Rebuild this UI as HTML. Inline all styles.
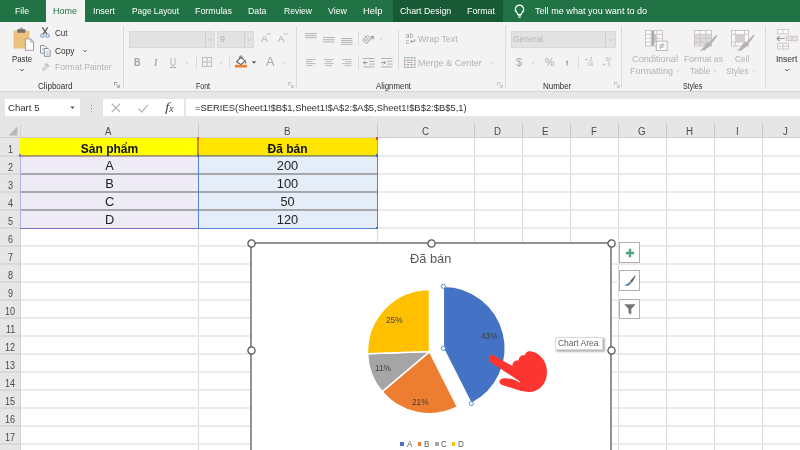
<!DOCTYPE html>
<html lang="vi"><head><meta charset="utf-8"><title>Excel - Pie chart</title>
<style>
html,body{margin:0;padding:0;}
body{width:800px;height:450px;overflow:hidden;position:relative;background:#fff;font-family:"Liberation Sans",sans-serif;}
#app{position:absolute;left:0;top:0;width:800px;height:450px;overflow:hidden;will-change:transform;}
.b{position:absolute;display:block;overflow:visible;}
.t{position:absolute;white-space:nowrap;transform-origin:0 50%;display:block;}
</style></head><body><div id="app">
<div class="b " style="left:0px;top:0px;width:800px;height:22px;background:#217346;"></div>
<div class="b " style="left:392.5px;top:0px;width:110px;height:22px;background:#185a35;"></div>
<div class="b " style="left:45.5px;top:0px;width:39.5px;height:23px;background:#f3f3f3;"></div>
<span class="t" style="left:15.00px;top:4px;color:#fff;font-size:9.8px;line-height:14px;transform:scaleX(0.8865);">File</span>
<span class="t" style="left:53.00px;top:4px;color:#217346;font-size:9.8px;line-height:14px;transform:scaleX(0.9181);">Home</span>
<span class="t" style="left:93.00px;top:4px;color:#fff;font-size:9.8px;line-height:14px;transform:scaleX(0.8976);">Insert</span>
<span class="t" style="left:132.00px;top:4px;color:#fff;font-size:9.8px;line-height:14px;transform:scaleX(0.8540);">Page Layout</span>
<span class="t" style="left:195.00px;top:4px;color:#fff;font-size:9.8px;line-height:14px;transform:scaleX(0.9059);">Formulas</span>
<span class="t" style="left:248.00px;top:4px;color:#fff;font-size:9.8px;line-height:14px;transform:scaleX(0.8937);">Data</span>
<span class="t" style="left:283.50px;top:4px;color:#fff;font-size:9.8px;line-height:14px;transform:scaleX(0.8714);">Review</span>
<span class="t" style="left:327.50px;top:4px;color:#fff;font-size:9.8px;line-height:14px;transform:scaleX(0.9020);">View</span>
<span class="t" style="left:363.00px;top:4px;color:#fff;font-size:9.8px;line-height:14px;transform:scaleX(0.9675);">Help</span>
<span class="t" style="left:399.50px;top:4px;color:#fff;font-size:9.8px;line-height:14px;transform:scaleX(0.8961);">Chart Design</span>
<span class="t" style="left:467.00px;top:4px;color:#fff;font-size:9.8px;line-height:14px;transform:scaleX(0.9021);">Format</span>
<span class="t" style="left:534.50px;top:4px;color:#fff;font-size:9.8px;line-height:14px;transform:scaleX(0.9278);">Tell me what you want to do</span>
<svg class="b" style="left:513px;top:4px;" width="13" height="15" viewBox="0 0 13 15"><path d="M6.5 1.2a4.2 4.2 0 0 0-2.4 7.6c.5.5.7 1 .7 1.7h3.4c0-.7.2-1.2.7-1.7A4.2 4.2 0 0 0 6.5 1.2z" fill="none" stroke="#fff" stroke-width="1.2"/><path d="M4.9 11.8h3.2M5.3 13.3h2.4" stroke="#fff" stroke-width="1.1" fill="none"/></svg>
<div class="b " style="left:0px;top:22px;width:800px;height:69.5px;background:#f3f3f3;"></div>
<div class="b " style="left:0px;top:91px;width:800px;height:1px;background:#d6d6d6;"></div>
<div class="b " style="left:122.5px;top:26px;width:1px;height:62px;background:#dadada;"></div>
<div class="b " style="left:295.5px;top:26px;width:1px;height:62px;background:#dadada;"></div>
<div class="b " style="left:505px;top:26px;width:1px;height:62px;background:#dadada;"></div>
<div class="b " style="left:621.25px;top:26px;width:1px;height:62px;background:#dadada;"></div>
<div class="b " style="left:765px;top:26px;width:1px;height:62px;background:#dadada;"></div>
<svg class="b" style="left:13px;top:28px;" width="22" height="23" viewBox="0 0 22 23"><rect x="0.5" y="2.600" width="15.800" height="17.800" rx="1" fill="#ecc27c"/>
<rect x="4.200" y="1.200" width="8.200" height="3.600" rx=".8" fill="#6f6f6f"/><circle cx="8.300" cy="1.300" r="1.300" fill="none" stroke="#6f6f6f" stroke-width=".9"/>
<path d="M12.400 10.900h5.200l2.900 2.900v8.500h-8.100z" fill="#fff" stroke="#8c8c8c" stroke-width="0.8"/><path d="M17.600 10.900v2.900h2.900" fill="none" stroke="#8c8c8c" stroke-width="0.8"/></svg>
<span class="t" style="left:12.00px;top:52px;color:#2e2e2e;font-size:9.8px;line-height:14px;transform:scaleX(0.7981);">Paste</span>
<svg class="b" style="left:17.5px;top:66.5px;" width="8" height="6" viewBox="0 0 8 6"><path d="M2.25 2.1 L4 3.9 L5.75 2.1" fill="none" stroke="#555" stroke-width="1"/></svg>
<svg class="b" style="left:40.3px;top:27.3px;" width="10" height="11" viewBox="0 0 10 11"><path d="M2.200 0.400L6.900 7.200M7.800 0.400L3.100 7.200" stroke="#5a5a5a" stroke-width="1.200" fill="none"/>
<circle cx="2.400" cy="8.700" r="1.700" fill="none" stroke="#6c8ebf" stroke-width="1"/><circle cx="7.600" cy="8.700" r="1.700" fill="none" stroke="#6c8ebf" stroke-width="1"/></svg>
<span class="t" style="left:54.50px;top:26px;color:#2e2e2e;font-size:9.8px;line-height:14px;transform:scaleX(0.8196);">Cut</span>
<svg class="b" style="left:40.3px;top:44.5px;" width="11" height="12" viewBox="0 0 11 12"><path d="M0.500 0.500h3.800l2 2v5.500h-5.800z" fill="#fff" stroke="#7a8597" stroke-width="0.9"/><path d="M1.800 3.200h2.200M1.800 5h2.200" stroke="#9aa6b8" stroke-width="0.7"/>
<path d="M4.300 3.500h3.800l2 2v5.800h-5.800z" fill="#fff" stroke="#7a8597" stroke-width="0.9"/><path d="M5.700 6.600h3M5.700 8.200h3M5.700 9.800h3" stroke="#9aa6b8" stroke-width="0.7"/></svg>
<span class="t" style="left:54.50px;top:44px;color:#2e2e2e;font-size:9.8px;line-height:14px;transform:scaleX(0.8523);">Copy</span>
<svg class="b" style="left:81px;top:47.5px;" width="8" height="6" viewBox="0 0 8 6"><path d="M2.25 2.1 L4 3.9 L5.75 2.1" fill="none" stroke="#666" stroke-width="1"/></svg>
<svg class="b" style="left:40.5px;top:62px;" width="10" height="11" viewBox="0 0 10 11"><path d="M5.5 0.8l3.2 3.2-2 2L3.5 2.8z" fill="#c4c4c4"/><path d="M3.2 3.8l2.8 2.8-3.6 2.8-1.6-1.6z" fill="#d0d0d0"/></svg>
<span class="t" style="left:54.50px;top:60px;color:#b3b3b3;font-size:9.8px;line-height:14px;transform:scaleX(0.8717);">Format Painter</span>
<span class="t" style="left:37.50px;top:80px;color:#2e2e2e;font-size:8.5px;line-height:12px;transform:scaleX(0.9482);">Clipboard</span>
<svg class="b" style="left:114px;top:82.3px;" width="6" height="6" viewBox="0 0 6 6"><path d="M0.5 3.5v-3h3" fill="none" stroke="#8a8a8a" stroke-width="0.8"/><path d="M2 2l3 3M5.3 2.8v2.5h-2.5" fill="none" stroke="#8a8a8a" stroke-width="0.8"/></svg>
<div class="b " style="left:129px;top:30.5px;width:85.5px;height:17px;background:#e2e2e2;box-shadow:inset 0 0 0 1px #d9d9d9;"></div>
<div class="b " style="left:205px;top:31.5px;width:1px;height:15px;background:#cfcfcf;"></div>
<svg class="b" style="left:206px;top:36.5px;" width="8" height="6" viewBox="0 0 8 6"><path d="M2.6 2.3 L4 3.7 L5.4 2.3" fill="none" stroke="#bcbcbc" stroke-width="1"/></svg>
<div class="b " style="left:217px;top:30.5px;width:36.5px;height:17px;background:#e2e2e2;box-shadow:inset 0 0 0 1px #d9d9d9;"></div>
<div class="b " style="left:244px;top:31.5px;width:1px;height:15px;background:#cfcfcf;"></div>
<svg class="b" style="left:245px;top:36.5px;" width="8" height="6" viewBox="0 0 8 6"><path d="M2.6 2.3 L4 3.7 L5.4 2.3" fill="none" stroke="#bcbcbc" stroke-width="1"/></svg>
<span class="t" style="left:220.00px;top:32px;color:#b5b5b5;font-size:9.8px;line-height:14px;transform:scaleX(0.9173);">9</span>
<span class="t" style="left:260.50px;top:32px;color:#a9a9a9;font-size:9.9px;line-height:14px;transform:scaleX(1.0297);">A</span>
<svg class="b" style="left:266px;top:32px;" width="5" height="4" viewBox="0 0 5 4"><path d="M0.5 3L2.5 1L4.5 3" fill="none" stroke="#a9a9a9" stroke-width="0.8"/></svg>
<span class="t" style="left:278.00px;top:32px;color:#a9a9a9;font-size:9.5px;line-height:13px;transform:scaleX(0.9942);">A</span>
<svg class="b" style="left:283px;top:32px;" width="5" height="4" viewBox="0 0 5 4"><path d="M0.5 1L2.5 3L4.5 1" fill="none" stroke="#a9a9a9" stroke-width="0.8"/></svg>
<span class="t" style="left:134.00px;top:56px;color:#a3a3a3;font-size:10px;line-height:14px;font-weight:bold;transform:scaleX(0.9000);">B</span>
<span class="t" style="left:153.50px;top:56px;color:#a9a9a9;font-size:10px;line-height:14px;font-weight:bold;font-style:italic;font-family:'Liberation Serif',serif;transform:scaleX(0.8994);">I</span>
<span class="t" style="left:170.00px;top:56px;color:#a9a9a9;font-size:10px;line-height:14px;transform:scaleX(0.8308);">U</span>
<div class="b " style="left:170px;top:67.3px;width:6px;height:0.9px;background:#a9a9a9;"></div>
<svg class="b" style="left:183px;top:59.5px;" width="8" height="6" viewBox="0 0 8 6"><path d="M2.6 2.3 L4 3.7 L5.4 2.3" fill="none" stroke="#cdcdcd" stroke-width="1"/></svg>
<div class="b " style="left:195.5px;top:55px;width:1px;height:14px;background:#dcdcdc;"></div>
<svg class="b" style="left:202px;top:57px;" width="10" height="10" viewBox="0 0 10 10"><rect x="0.5" y="0.5" width="9" height="9" fill="none" stroke="#bdbdbd" stroke-width="1"/><path d="M5 0.5v9M0.5 5h9" stroke="#bdbdbd" stroke-width="1"/></svg>
<svg class="b" style="left:216.75px;top:59.5px;" width="8" height="6" viewBox="0 0 8 6"><path d="M2.6 2.3 L4 3.7 L5.4 2.3" fill="none" stroke="#cdcdcd" stroke-width="1"/></svg>
<div class="b " style="left:229px;top:55px;width:1px;height:14px;background:#dcdcdc;"></div>
<svg class="b" style="left:234.8px;top:55.4px;" width="13" height="13" viewBox="0 0 13 13"><path d="M1.6 6.700L5.700 2.600l4.500 3-4.200 4z" fill="#fff" stroke="#5a5a5a" stroke-width="1.100" stroke-linejoin="round"/>
<path d="M4.600 3.600c-.5-1.500.3-2.600 1.300-2.600s1.600.9 1.500 2" fill="none" stroke="#5a5a5a" stroke-width="1"/>
<path d="M10.400 5.700c1 1.300 1.300 2.400.6 2.900-.7.400-1.400-.5-.6-2.900z" fill="#3a6fb7"/>
<rect x="0" y="9.800" width="12" height="2.700" fill="#ed7d31"/></svg>
<svg class="b" style="left:250.4px;top:59.3px;" width="8" height="6" viewBox="0 0 8 6"><path d="M2.5 2.15 L4 3.85 L5.5 2.15" fill="none" stroke="#44546a" stroke-width="1.1"/></svg>
<span class="t" style="left:265.50px;top:54px;color:#a9a9a9;font-size:12px;line-height:17px;transform:scaleX(1.0619);">A</span>
<svg class="b" style="left:279.75px;top:59.5px;" width="8" height="6" viewBox="0 0 8 6"><path d="M2.6 2.3 L4 3.7 L5.4 2.3" fill="none" stroke="#cdcdcd" stroke-width="1"/></svg>
<span class="t" style="left:195.50px;top:80px;color:#2e2e2e;font-size:8.5px;line-height:12px;transform:scaleX(0.8231);">Font</span>
<svg class="b" style="left:287.5px;top:82.3px;" width="6" height="6" viewBox="0 0 6 6"><path d="M0.5 3.5v-3h3" fill="none" stroke="#b5b5b5" stroke-width="0.8"/><path d="M2 2l3 3M5.3 2.8v2.5h-2.5" fill="none" stroke="#b5b5b5" stroke-width="0.8"/></svg>
<svg class="b" style="left:304.5px;top:32.8px;" width="11.5" height="7.300000000000001" viewBox="0 0 11.5 7.300000000000001"><rect x="0" y="0.0" width="11.5" height="1" fill="#b4b4b4"/><rect x="0" y="2.1" width="11.5" height="1" fill="#b4b4b4"/><rect x="0" y="4.2" width="11.5" height="1" fill="#b4b4b4"/></svg>
<svg class="b" style="left:323px;top:36.6px;" width="11.5" height="7.6000000000000005" viewBox="0 0 11.5 7.6000000000000005"><rect x="0.0" y="0.0" width="11.5" height="1" fill="#b4b4b4"/><rect x="0.0" y="2.2" width="11.5" height="1" fill="#b4b4b4"/><rect x="0.0" y="4.4" width="11.5" height="1" fill="#b4b4b4"/></svg>
<svg class="b" style="left:340.5px;top:38.2px;" width="11.5" height="8.8" viewBox="0 0 11.5 8.8"><rect x="0" y="0.0" width="11.5" height="1" fill="#b4b4b4"/><rect x="0" y="1.95" width="11.5" height="1" fill="#b4b4b4"/><rect x="0" y="3.9" width="11.5" height="1" fill="#b4b4b4"/><rect x="0" y="5.85" width="11.5" height="1" fill="#b4b4b4"/></svg>
<div class="b " style="left:357.5px;top:31px;width:1px;height:15px;background:#dcdcdc;"></div>
<svg class="b" style="left:362px;top:33px;" width="12" height="11" viewBox="0 0 12 11"><text x="0" y="8" font-size="7.500" fill="#9c9c9c" transform="rotate(-42 4 6)" font-family="Liberation Sans,sans-serif">ab</text><path d="M4 10.800L11.300 3.500M11.300 3.500l-2.800.3M11.300 3.500l-.3 2.800" stroke="#8c8c8c" stroke-width="1" fill="none"/></svg>
<svg class="b" style="left:376.5px;top:36px;" width="8" height="6" viewBox="0 0 8 6"><path d="M2.6 2.3 L4 3.7 L5.4 2.3" fill="none" stroke="#cdcdcd" stroke-width="1"/></svg>
<svg class="b" style="left:305.8px;top:58.8px;" width="9.5" height="9.2" viewBox="0 0 9.5 9.2"><rect x="0" y="0.0" width="9.5" height="1" fill="#bcbcbc"/><rect x="0" y="2.05" width="6.5" height="1" fill="#bcbcbc"/><rect x="0" y="4.1" width="9.5" height="1" fill="#bcbcbc"/><rect x="0" y="6.1499999999999995" width="6.5" height="1" fill="#bcbcbc"/></svg>
<svg class="b" style="left:323.5px;top:58.8px;" width="9.5" height="9.2" viewBox="0 0 9.5 9.2"><rect x="0.0" y="0.0" width="9.5" height="1" fill="#bcbcbc"/><rect x="1.5" y="2.05" width="6.5" height="1" fill="#bcbcbc"/><rect x="0.0" y="4.1" width="9.5" height="1" fill="#bcbcbc"/><rect x="1.5" y="6.1499999999999995" width="6.5" height="1" fill="#bcbcbc"/></svg>
<svg class="b" style="left:341.5px;top:58.8px;" width="9.5" height="9.2" viewBox="0 0 9.5 9.2"><rect x="0.0" y="0.0" width="9.5" height="1" fill="#bcbcbc"/><rect x="3.0" y="2.05" width="6.5" height="1" fill="#bcbcbc"/><rect x="0.0" y="4.1" width="9.5" height="1" fill="#bcbcbc"/><rect x="3.0" y="6.1499999999999995" width="6.5" height="1" fill="#bcbcbc"/></svg>
<div class="b " style="left:357.5px;top:55px;width:1px;height:15px;background:#dcdcdc;"></div>
<svg class="b" style="left:362.5px;top:58px;" width="11.5" height="9.5" viewBox="0 0 11.5 9.5"><path d="M0 .5h11.5M6 3.3h5.5M6 6.1h5.5M0 8.9h11.5" stroke="#b0b0b0" stroke-width="1"/><path d="M4.6 4.7H.6M2.2 3.1L.6 4.7l1.6 1.6" fill="none" stroke="#8f8f8f" stroke-width="1"/></svg>
<svg class="b" style="left:380.5px;top:58px;" width="11.5" height="9.5" viewBox="0 0 11.5 9.5"><path d="M0 .5h11.5M6 3.3h5.5M6 6.1h5.5M0 8.9h11.5" stroke="#b0b0b0" stroke-width="1"/><path d="M.4 4.7h4M2.8 3.1l1.6 1.6-1.6 1.6" fill="none" stroke="#8f8f8f" stroke-width="1"/></svg>
<div class="b " style="left:398px;top:30px;width:1px;height:40px;background:#dcdcdc;"></div>
<svg class="b" style="left:404.5px;top:33px;" width="11" height="11" viewBox="0 0 11 11"><text x="0.8" y="5.300" font-size="6.600" fill="#9a9a9a" font-family="Liberation Sans,sans-serif">ab</text><text x="0.8" y="10.700" font-size="6.600" fill="#9a9a9a" font-family="Liberation Sans,sans-serif">c</text><path d="M9.700 6v2.400h-4M7 7L5.600 8.400 7 9.800" fill="none" stroke="#9a9a9a" stroke-width="0.9"/></svg>
<span class="t" style="left:418.25px;top:32px;color:#b3b3b3;font-size:9.8px;line-height:14px;transform:scaleX(0.9084);">Wrap Text</span>
<svg class="b" style="left:403.75px;top:56.5px;" width="11.5" height="11" viewBox="0 0 11.5 11"><rect x=".5" y=".5" width="10.5" height="10" fill="none" stroke="#b9b9b9" stroke-width="1"/><path d="M.5 3.5h10.5M.5 7.5h10.5M4 .5v3M7.5 .5v3M4 7.5v3M7.5 7.5v3" stroke="#b9b9b9" stroke-width="0.9"/><path d="M2.5 5.5h6.5" stroke="#c9a0a0" stroke-width="0.9"/></svg>
<span class="t" style="left:418.25px;top:56px;color:#b3b3b3;font-size:9.8px;line-height:14px;transform:scaleX(0.9216);">Merge &amp; Center</span>
<svg class="b" style="left:488px;top:59.5px;" width="8" height="6" viewBox="0 0 8 6"><path d="M2.6 2.3 L4 3.7 L5.4 2.3" fill="none" stroke="#cdcdcd" stroke-width="1"/></svg>
<span class="t" style="left:376.25px;top:80px;color:#2e2e2e;font-size:8.5px;line-height:12px;transform:scaleX(0.9259);">Alignment</span>
<svg class="b" style="left:497px;top:82.3px;" width="6" height="6" viewBox="0 0 6 6"><path d="M0.5 3.5v-3h3" fill="none" stroke="#b5b5b5" stroke-width="0.8"/><path d="M2 2l3 3M5.3 2.8v2.5h-2.5" fill="none" stroke="#b5b5b5" stroke-width="0.8"/></svg>
<div class="b " style="left:511.25px;top:30.5px;width:104.5px;height:17px;background:#e2e2e2;box-shadow:inset 0 0 0 1px #d9d9d9;"></div>
<div class="b " style="left:605px;top:31.5px;width:1px;height:15px;background:#cfcfcf;"></div>
<svg class="b" style="left:606.5px;top:36.5px;" width="8" height="6" viewBox="0 0 8 6"><path d="M2.6 2.3 L4 3.7 L5.4 2.3" fill="none" stroke="#bcbcbc" stroke-width="1"/></svg>
<span class="t" style="left:513.25px;top:32px;color:#b5b5b5;font-size:9.8px;line-height:14px;transform:scaleX(0.8604);">General</span>
<span class="t" style="left:516.25px;top:54px;color:#a9a9a9;font-size:11.5px;line-height:16px;transform:scaleX(0.9772);">$</span>
<svg class="b" style="left:529.25px;top:59.5px;" width="8" height="6" viewBox="0 0 8 6"><path d="M2.6 2.3 L4 3.7 L5.4 2.3" fill="none" stroke="#cdcdcd" stroke-width="1"/></svg>
<span class="t" style="left:544.50px;top:55px;color:#a9a9a9;font-size:11px;line-height:15px;transform:scaleX(0.9458);">%</span>
<span class="t" style="left:564.50px;top:48px;color:#a9a9a9;font-size:14px;line-height:20px;font-weight:bold;transform:scaleX(1.0284);">,</span>
<div class="b " style="left:578px;top:55px;width:1px;height:14px;background:#dcdcdc;"></div>
<svg class="b" style="left:584.5px;top:57px;" width="10" height="10" viewBox="0 0 10 10"><text x="3.5" y="4.2" font-size="4.6" fill="#b0b0b0" font-family="Liberation Sans,sans-serif">.0</text><text x="1.8" y="9.2" font-size="4.6" fill="#b0b0b0" font-family="Liberation Sans,sans-serif">.00</text><path d="M3 2.5H.5M1.5 1.5l-1 1 1 1" fill="none" stroke="#a9b8cf" stroke-width="0.7"/></svg>
<svg class="b" style="left:602px;top:57px;" width="10" height="10" viewBox="0 0 10 10"><text x="2.4" y="4.2" font-size="4.6" fill="#b0b0b0" font-family="Liberation Sans,sans-serif">.00</text><text x="4.5" y="9.2" font-size="4.6" fill="#b0b0b0" font-family="Liberation Sans,sans-serif">.0</text><path d="M.5 7.5H3M2 6.5l1 1-1 1" fill="none" stroke="#a9b8cf" stroke-width="0.7"/></svg>
<span class="t" style="left:542.50px;top:80px;color:#2e2e2e;font-size:8.5px;line-height:12px;transform:scaleX(0.9344);">Number</span>
<svg class="b" style="left:613.5px;top:82.3px;" width="6" height="6" viewBox="0 0 6 6"><path d="M0.5 3.5v-3h3" fill="none" stroke="#b5b5b5" stroke-width="0.8"/><path d="M2 2l3 3M5.3 2.8v2.5h-2.5" fill="none" stroke="#b5b5b5" stroke-width="0.8"/></svg>
<svg class="b" style="left:645px;top:30px;" width="23" height="21" viewBox="0 0 23 21"><rect x=".5" y=".5" width="17" height="15.5" fill="#fafafa" stroke="#d0c3c8" stroke-width="1"/>
<path d="M.5 4.4h17M.5 8.3h17M.5 12.2h17M6.2 .5v15.5M11.9 .5v15.5" stroke="#d0c3c8" stroke-width="0.9"/>
<rect x="6.6" y=".9" width="2.6" height="14.7" fill="#a9a9a9"/><rect x="9.2" y="4.8" width="2.3" height="7" fill="#c4c4c4"/>
<rect x="11.3" y="11.2" width="10.8" height="9.3" fill="#fff" stroke="#b5b5b5" stroke-width="1"/>
<path d="M14 14.8h5.4M14 17h5.4M18.3 13l-3.2 6" stroke="#9a9a9a" stroke-width="0.8" fill="none"/></svg>
<span class="t" style="left:632.00px;top:52px;color:#b3b3b3;font-size:9.8px;line-height:14px;transform:scaleX(0.9381);">Conditional</span>
<span class="t" style="left:629.50px;top:64px;color:#b3b3b3;font-size:9.8px;line-height:14px;transform:scaleX(0.9180);">Formatting</span>
<svg class="b" style="left:674px;top:67.5px;" width="8" height="6" viewBox="0 0 8 6"><path d="M2.6 2.3 L4 3.7 L5.4 2.3" fill="none" stroke="#cdcdcd" stroke-width="1"/></svg>
<svg class="b" style="left:693.5px;top:30px;" width="23" height="21" viewBox="0 0 23 21"><rect x=".5" y=".5" width="17" height="15.5" fill="#fafafa" stroke="#d0c3c8" stroke-width="1"/>
<rect x="1" y="4.4" width="16" height="11.2" fill="#dcdcdc"/>
<path d="M.5 4.4h17M.5 8.3h17M.5 12.2h17M6.2 .5v15.5M11.9 .5v15.5" stroke="#d0c3c8" stroke-width="0.9"/>
<path d="M22.900 4.600L23.400 6.100 17.900 13.300 15.600 11.400z" fill="#b4b4b4"/><path d="M15.300 11.800L17.600 13.700C16.800 15.800 15 17.200 13 18.200L10.600 20.500H5.400C8.400 19.100 9.900 17.200 10.900 15.200 11.900 13.300 13.300 12.200 15.300 11.800z" fill="#b4b4b4"/></svg>
<span class="t" style="left:684.25px;top:52px;color:#b3b3b3;font-size:9.8px;line-height:14px;transform:scaleX(0.8841);">Format as</span>
<span class="t" style="left:689.50px;top:64px;color:#b3b3b3;font-size:9.8px;line-height:14px;transform:scaleX(0.8750);">Table</span>
<svg class="b" style="left:711px;top:67.5px;" width="8" height="6" viewBox="0 0 8 6"><path d="M2.6 2.3 L4 3.7 L5.4 2.3" fill="none" stroke="#cdcdcd" stroke-width="1"/></svg>
<svg class="b" style="left:731px;top:30px;" width="23" height="21" viewBox="0 0 23 21"><rect x=".5" y=".5" width="17" height="15.5" fill="#fafafa" stroke="#d0c3c8" stroke-width="1"/>
<path d="M.5 4.4h17M.5 12.2h17M4.4 .5v15.5M13.6 .5v15.5" stroke="#d0c3c8" stroke-width="0.9"/>
<rect x="4.9" y="4.9" width="8.3" height="6.9" fill="#cfcfcf"/>
<path d="M22.900 4.600L23.400 6.100 17.900 13.300 15.600 11.400z" fill="#b4b4b4"/><path d="M15.300 11.800L17.600 13.700C16.800 15.800 15 17.200 13 18.200L10.600 20.500H5.400C8.400 19.100 9.900 17.200 10.900 15.200 11.900 13.300 13.300 12.200 15.300 11.800z" fill="#b4b4b4"/></svg>
<span class="t" style="left:735.00px;top:52px;color:#b3b3b3;font-size:9.8px;line-height:14px;transform:scaleX(0.8441);">Cell</span>
<span class="t" style="left:726.25px;top:64px;color:#b3b3b3;font-size:9.8px;line-height:14px;transform:scaleX(0.8431);">Styles</span>
<svg class="b" style="left:750.25px;top:67.5px;" width="8" height="6" viewBox="0 0 8 6"><path d="M2.6 2.3 L4 3.7 L5.4 2.3" fill="none" stroke="#cdcdcd" stroke-width="1"/></svg>
<span class="t" style="left:683.25px;top:80px;color:#2e2e2e;font-size:8.5px;line-height:12px;transform:scaleX(0.8316);">Styles</span>
<svg class="b" style="left:776px;top:28.5px;" width="22" height="21" viewBox="0 0 22 21"><rect x="1.5" y=".5" width="11" height="4.4" fill="#fafafa" stroke="#d0c3c8" stroke-width="0.9"/><path d="M7 .5v4.4" stroke="#d0c3c8" stroke-width="0.9"/>
<rect x="10.5" y="7.3" width="11" height="4.4" fill="#e3e3e3" stroke="#d0c3c8" stroke-width="0.9"/><path d="M16 7.3v4.4" stroke="#d0c3c8" stroke-width="0.9"/>
<rect x="1.5" y="14.4" width="11" height="5.6" fill="#fafafa" stroke="#d0c3c8" stroke-width="0.9"/><path d="M7 14.4v5.6M1.5 17.2h11" stroke="#d0c3c8" stroke-width="0.9"/>
<path d="M8.8 9.5H1M3.6 6.9L1 9.5l2.6 2.6" fill="none" stroke="#9a9a9a" stroke-width="1.2"/></svg>
<span class="t" style="left:776.25px;top:52px;color:#2e2e2e;font-size:9.8px;line-height:14px;transform:scaleX(0.8670);">Insert</span>
<svg class="b" style="left:782.75px;top:66.5px;" width="8" height="6" viewBox="0 0 8 6"><path d="M2.25 2.1 L4 3.9 L5.75 2.1" fill="none" stroke="#555" stroke-width="1"/></svg>
<div class="b " style="left:0px;top:92px;width:800px;height:32px;background:#e6e6e6;"></div>
<div class="b " style="left:4.5px;top:98.75px;width:75px;height:17.5px;background:#fff;"></div>
<span class="t" style="left:8.00px;top:101px;color:#2e2e2e;font-size:9.8px;line-height:14px;transform:scaleX(0.9802);">Chart 5</span>
<svg class="b" style="left:70px;top:105.5px;" width="5" height="4" viewBox="0 0 5 4"><path d="M.4 .5h4.2L2.500 2.900z" fill="#555"/></svg>
<div class="b " style="left:90.5px;top:104.5px;width:1px;height:1px;background:#9a9a9a;"></div>
<div class="b " style="left:90.5px;top:107.5px;width:1px;height:1px;background:#9a9a9a;"></div>
<div class="b " style="left:90.5px;top:110.5px;width:1px;height:1px;background:#9a9a9a;"></div>
<div class="b " style="left:102.5px;top:98.75px;width:81.5px;height:17.5px;background:#fff;"></div>
<svg class="b" style="left:110.5px;top:103.2px;" width="10" height="10" viewBox="0 0 10 10"><path d="M.8 .8l8.200 8.200M9 .8l-8.200 8.200" stroke="#b9b9b9" stroke-width="1.25" fill="none"/></svg>
<svg class="b" style="left:138px;top:103.5px;" width="11" height="9" viewBox="0 0 11 9"><path d="M.6 4.800l3.200 3.200L9.800 .8" stroke="#b9b9b9" stroke-width="1.300" fill="none"/></svg>
<span class="t" style="left:164.80px;top:99px;color:#4f4f4f;font-size:12px;line-height:17px;font-style:italic;font-family:'Liberation Serif',serif;transform:scaleX(1.3498);">f</span>
<span class="t" style="left:169.30px;top:103px;color:#4f4f4f;font-size:9.5px;line-height:13px;font-style:italic;font-family:'Liberation Serif',serif;transform:scaleX(1.1147);">x</span>
<div class="b " style="left:186.25px;top:98.75px;width:614px;height:17.5px;background:#fff;"></div>
<span class="t" style="left:194.50px;top:101px;color:#2e2e2e;font-size:9.8px;line-height:14px;transform:scaleX(0.9601);">=SERIES(Sheet1!$B$1,Sheet1!$A$2:$A$5,Sheet1!$B$2:$B$5,1)</span>
<div class="b " style="left:0px;top:124px;width:800px;height:326px;background:#fff;"></div>
<div class="b " style="left:0px;top:116.25px;width:800px;height:21.5px;background:#e6e6e6;"></div>
<div class="b " style="left:0px;top:137.5px;width:20px;height:313px;background:#e6e6e6;"></div>
<svg class="b" style="left:8px;top:126px;" width="10" height="10" viewBox="0 0 10 10"><path d="M9.5 .5v9H.5z" fill="#b7b7b7"/></svg>
<div class="b " style="left:198px;top:138px;width:1px;height:312px;background:#dadada;"></div>
<div class="b " style="left:198px;top:122.5px;width:1px;height:15px;background:#c9c9c9;"></div>
<div class="b " style="left:377px;top:138px;width:1px;height:312px;background:#dadada;"></div>
<div class="b " style="left:377px;top:122.5px;width:1px;height:15px;background:#c9c9c9;"></div>
<div class="b " style="left:474px;top:138px;width:1px;height:312px;background:#dadada;"></div>
<div class="b " style="left:474px;top:122.5px;width:1px;height:15px;background:#c9c9c9;"></div>
<div class="b " style="left:522px;top:138px;width:1px;height:312px;background:#dadada;"></div>
<div class="b " style="left:522px;top:122.5px;width:1px;height:15px;background:#c9c9c9;"></div>
<div class="b " style="left:570px;top:138px;width:1px;height:312px;background:#dadada;"></div>
<div class="b " style="left:570px;top:122.5px;width:1px;height:15px;background:#c9c9c9;"></div>
<div class="b " style="left:618px;top:138px;width:1px;height:312px;background:#dadada;"></div>
<div class="b " style="left:618px;top:122.5px;width:1px;height:15px;background:#c9c9c9;"></div>
<div class="b " style="left:666px;top:138px;width:1px;height:312px;background:#dadada;"></div>
<div class="b " style="left:666px;top:122.5px;width:1px;height:15px;background:#c9c9c9;"></div>
<div class="b " style="left:714px;top:138px;width:1px;height:312px;background:#dadada;"></div>
<div class="b " style="left:714px;top:122.5px;width:1px;height:15px;background:#c9c9c9;"></div>
<div class="b " style="left:762px;top:138px;width:1px;height:312px;background:#dadada;"></div>
<div class="b " style="left:762px;top:122.5px;width:1px;height:15px;background:#c9c9c9;"></div>
<div class="b " style="left:810px;top:138px;width:1px;height:312px;background:#dadada;"></div>
<div class="b " style="left:810px;top:122.5px;width:1px;height:15px;background:#c9c9c9;"></div>
<div class="b " style="left:20px;top:155.0px;width:780px;height:2px;background:#ebebeb;"></div>
<div class="b " style="left:0px;top:155.0px;width:20px;height:2px;background:#d9d9d9;"></div>
<div class="b " style="left:20px;top:173.0px;width:780px;height:2px;background:#ebebeb;"></div>
<div class="b " style="left:0px;top:173.0px;width:20px;height:2px;background:#d9d9d9;"></div>
<div class="b " style="left:20px;top:191.0px;width:780px;height:2px;background:#ebebeb;"></div>
<div class="b " style="left:0px;top:191.0px;width:20px;height:2px;background:#d9d9d9;"></div>
<div class="b " style="left:20px;top:209.0px;width:780px;height:2px;background:#ebebeb;"></div>
<div class="b " style="left:0px;top:209.0px;width:20px;height:2px;background:#d9d9d9;"></div>
<div class="b " style="left:20px;top:227.0px;width:780px;height:2px;background:#ebebeb;"></div>
<div class="b " style="left:0px;top:227.0px;width:20px;height:2px;background:#d9d9d9;"></div>
<div class="b " style="left:20px;top:245.0px;width:780px;height:2px;background:#ebebeb;"></div>
<div class="b " style="left:0px;top:245.0px;width:20px;height:2px;background:#d9d9d9;"></div>
<div class="b " style="left:20px;top:263.0px;width:780px;height:2px;background:#ebebeb;"></div>
<div class="b " style="left:0px;top:263.0px;width:20px;height:2px;background:#d9d9d9;"></div>
<div class="b " style="left:20px;top:281.0px;width:780px;height:2px;background:#ebebeb;"></div>
<div class="b " style="left:0px;top:281.0px;width:20px;height:2px;background:#d9d9d9;"></div>
<div class="b " style="left:20px;top:299.0px;width:780px;height:2px;background:#ebebeb;"></div>
<div class="b " style="left:0px;top:299.0px;width:20px;height:2px;background:#d9d9d9;"></div>
<div class="b " style="left:20px;top:317.0px;width:780px;height:2px;background:#ebebeb;"></div>
<div class="b " style="left:0px;top:317.0px;width:20px;height:2px;background:#d9d9d9;"></div>
<div class="b " style="left:20px;top:335.0px;width:780px;height:2px;background:#ebebeb;"></div>
<div class="b " style="left:0px;top:335.0px;width:20px;height:2px;background:#d9d9d9;"></div>
<div class="b " style="left:20px;top:353.0px;width:780px;height:2px;background:#ebebeb;"></div>
<div class="b " style="left:0px;top:353.0px;width:20px;height:2px;background:#d9d9d9;"></div>
<div class="b " style="left:20px;top:371.0px;width:780px;height:2px;background:#ebebeb;"></div>
<div class="b " style="left:0px;top:371.0px;width:20px;height:2px;background:#d9d9d9;"></div>
<div class="b " style="left:20px;top:389.0px;width:780px;height:2px;background:#ebebeb;"></div>
<div class="b " style="left:0px;top:389.0px;width:20px;height:2px;background:#d9d9d9;"></div>
<div class="b " style="left:20px;top:407.0px;width:780px;height:2px;background:#ebebeb;"></div>
<div class="b " style="left:0px;top:407.0px;width:20px;height:2px;background:#d9d9d9;"></div>
<div class="b " style="left:20px;top:425.0px;width:780px;height:2px;background:#ebebeb;"></div>
<div class="b " style="left:0px;top:425.0px;width:20px;height:2px;background:#d9d9d9;"></div>
<div class="b " style="left:20px;top:443.0px;width:780px;height:2px;background:#ebebeb;"></div>
<div class="b " style="left:0px;top:443.0px;width:20px;height:2px;background:#d9d9d9;"></div>
<div class="b " style="left:20px;top:461.0px;width:780px;height:2px;background:#ebebeb;"></div>
<div class="b " style="left:0px;top:461.0px;width:20px;height:2px;background:#d9d9d9;"></div>
<div class="b " style="left:0px;top:137px;width:800px;height:1px;background:#cdcdcd;"></div>
<div class="b " style="left:20px;top:124px;width:1px;height:326px;background:#d2d2d2;"></div>
<span class="t" style="left:105.46px;top:125px;color:#4a4a4a;font-size:10px;line-height:14px;transform:scaleX(0.9700);">A</span>
<span class="t" style="left:283.96px;top:125px;color:#4a4a4a;font-size:10px;line-height:14px;transform:scaleX(0.9700);">B</span>
<span class="t" style="left:421.70px;top:125px;color:#4a4a4a;font-size:10px;line-height:14px;transform:scaleX(0.9700);">C</span>
<span class="t" style="left:494.20px;top:125px;color:#4a4a4a;font-size:10px;line-height:14px;transform:scaleX(0.9700);">D</span>
<span class="t" style="left:542.46px;top:125px;color:#4a4a4a;font-size:10px;line-height:14px;transform:scaleX(0.9700);">E</span>
<span class="t" style="left:590.74px;top:125px;color:#4a4a4a;font-size:10px;line-height:14px;transform:scaleX(0.9700);">F</span>
<span class="t" style="left:637.93px;top:125px;color:#4a4a4a;font-size:10px;line-height:14px;transform:scaleX(0.9700);">G</span>
<span class="t" style="left:686.20px;top:125px;color:#4a4a4a;font-size:10px;line-height:14px;transform:scaleX(0.9700);">H</span>
<span class="t" style="left:736.35px;top:125px;color:#4a4a4a;font-size:10px;line-height:14px;transform:scaleX(0.9700);">I</span>
<span class="t" style="left:783.28px;top:125px;color:#4a4a4a;font-size:10px;line-height:14px;transform:scaleX(0.9700);">J</span>
<span class="t" style="left:7.70px;top:143px;color:#4a4a4a;font-size:10px;line-height:14px;transform:scaleX(0.9000);">1</span>
<span class="t" style="left:7.70px;top:161px;color:#4a4a4a;font-size:10px;line-height:14px;transform:scaleX(0.9000);">2</span>
<span class="t" style="left:7.70px;top:179px;color:#4a4a4a;font-size:10px;line-height:14px;transform:scaleX(0.9000);">3</span>
<span class="t" style="left:7.70px;top:197px;color:#4a4a4a;font-size:10px;line-height:14px;transform:scaleX(0.9000);">4</span>
<span class="t" style="left:7.70px;top:215px;color:#4a4a4a;font-size:10px;line-height:14px;transform:scaleX(0.9000);">5</span>
<span class="t" style="left:7.70px;top:233px;color:#4a4a4a;font-size:10px;line-height:14px;transform:scaleX(0.9000);">6</span>
<span class="t" style="left:7.70px;top:251px;color:#4a4a4a;font-size:10px;line-height:14px;transform:scaleX(0.9000);">7</span>
<span class="t" style="left:7.70px;top:269px;color:#4a4a4a;font-size:10px;line-height:14px;transform:scaleX(0.9000);">8</span>
<span class="t" style="left:7.70px;top:287px;color:#4a4a4a;font-size:10px;line-height:14px;transform:scaleX(0.9000);">9</span>
<span class="t" style="left:5.19px;top:305px;color:#4a4a4a;font-size:10px;line-height:14px;transform:scaleX(0.9000);">10</span>
<span class="t" style="left:5.53px;top:323px;color:#4a4a4a;font-size:10px;line-height:14px;transform:scaleX(0.9000);">11</span>
<span class="t" style="left:5.19px;top:341px;color:#4a4a4a;font-size:10px;line-height:14px;transform:scaleX(0.9000);">12</span>
<span class="t" style="left:5.19px;top:359px;color:#4a4a4a;font-size:10px;line-height:14px;transform:scaleX(0.9000);">13</span>
<span class="t" style="left:5.19px;top:377px;color:#4a4a4a;font-size:10px;line-height:14px;transform:scaleX(0.9000);">14</span>
<span class="t" style="left:5.19px;top:395px;color:#4a4a4a;font-size:10px;line-height:14px;transform:scaleX(0.9000);">15</span>
<span class="t" style="left:5.19px;top:413px;color:#4a4a4a;font-size:10px;line-height:14px;transform:scaleX(0.9000);">16</span>
<span class="t" style="left:5.19px;top:431px;color:#4a4a4a;font-size:10px;line-height:14px;transform:scaleX(0.9000);">17</span>
<span class="t" style="left:5.19px;top:449px;color:#4a4a4a;font-size:10px;line-height:14px;transform:scaleX(0.9000);">18</span>
<div class="b " style="left:20px;top:138px;width:178px;height:17.5px;background:#ffff00;"></div>
<div class="b " style="left:198px;top:138px;width:179px;height:17.5px;background:#fee600;"></div>
<div class="b " style="left:20px;top:155.5px;width:178px;height:72.5px;background:#eeeaf6;"></div>
<div class="b " style="left:198px;top:155.5px;width:179px;height:72.5px;background:#e5edf8;"></div>
<div class="b " style="left:20px;top:155.0px;width:357px;height:1.6px;background:#a6a6a8;"></div>
<div class="b " style="left:20px;top:173.0px;width:357px;height:1.6px;background:#a6a6a8;"></div>
<div class="b " style="left:20px;top:191.0px;width:357px;height:1.6px;background:#a6a6a8;"></div>
<div class="b " style="left:20px;top:209.0px;width:357px;height:1.6px;background:#a6a6a8;"></div>
<div class="b " style="left:20px;top:154.8px;width:178px;height:1.3px;background:#b79a3c;"></div>
<div class="b " style="left:198px;top:154.8px;width:179px;height:1.3px;background:#8d9a45;"></div>
<div class="b " style="left:197.4px;top:138px;width:1.6px;height:17.5px;background:#d08a1e;"></div>
<div class="b " style="left:376.5px;top:138px;width:1px;height:17.5px;background:#e8877e;"></div>
<div class="b " style="left:197.5px;top:155.5px;width:1.5px;height:72.5px;background:#5583d3;"></div>
<div class="b " style="left:376.5px;top:155.5px;width:1px;height:72.5px;background:#5583d3;"></div>
<div class="b " style="left:198px;top:227.5px;width:179px;height:1px;background:#5583d3;"></div>
<div class="b " style="left:20px;top:227.5px;width:178px;height:1px;background:#8266c4;"></div>
<div class="b " style="left:19.6px;top:155.5px;width:1.0px;height:72.5px;background:#b9aee0;"></div>
<div class="b " style="left:375.7px;top:154.2px;width:2.6px;height:2.6px;background:#3f6fd0;"></div>
<div class="b " style="left:375.7px;top:226.7px;width:2.6px;height:2.6px;background:#3f6fd0;"></div>
<div class="b " style="left:196.89999999999998px;top:154.2px;width:2.6px;height:2.6px;background:#3f6fd0;"></div>
<div class="b " style="left:18.9px;top:154.29999999999998px;width:2.6px;height:2.6px;background:#8a74cc;"></div>
<div class="b " style="left:196.89999999999998px;top:137.0px;width:2.6px;height:2.6px;background:#d9642a;"></div>
<div class="b " style="left:375.7px;top:137.0px;width:2.6px;height:2.6px;background:#e0453a;"></div>
<span class="t" style="left:80.83px;top:141px;color:#111;font-size:12px;line-height:17px;font-weight:bold;">Sản phẩm</span>
<span class="t" style="left:267.50px;top:141px;color:#111;font-size:12px;line-height:17px;font-weight:bold;">Đã bán</span>
<span class="t" style="left:105.23px;top:157px;color:#222;font-size:12.8px;line-height:18px;">A</span>
<span class="t" style="left:276.82px;top:157px;color:#222;font-size:12.8px;line-height:18px;">200</span>
<span class="t" style="left:105.23px;top:175px;color:#222;font-size:12.8px;line-height:18px;">B</span>
<span class="t" style="left:276.82px;top:175px;color:#222;font-size:12.8px;line-height:18px;">100</span>
<span class="t" style="left:104.88px;top:193px;color:#222;font-size:12.8px;line-height:18px;">C</span>
<span class="t" style="left:280.38px;top:193px;color:#222;font-size:12.8px;line-height:18px;">50</span>
<span class="t" style="left:104.88px;top:211px;color:#222;font-size:12.8px;line-height:18px;">D</span>
<span class="t" style="left:276.82px;top:211px;color:#222;font-size:12.8px;line-height:18px;">120</span>
<div class="b " style="left:250px;top:242px;width:362px;height:214px;background:#fff;border:2px solid #939393;box-sizing:border-box;"></div>
<span class="t" style="left:409.82px;top:249px;color:#595959;font-size:13.5px;line-height:19px;transform:scaleX(0.9500);">Đã bán</span>
<svg class="b" style="left:0px;top:0px;" width="800" height="450" viewBox="0 0 800 450"><path d="M443.31 348.31L443.31 286.31A62.0 62.0 0 0 1 471.28 403.64Z" fill="#4472c4" stroke="#fff" stroke-width="1.5" stroke-linejoin="round"/><path d="M429.50 351.60L457.46 406.94A62.0 62.0 0 0 1 382.15 391.63Z" fill="#ed7d31" stroke="#fff" stroke-width="1.5" stroke-linejoin="round"/><path d="M429.50 351.60L382.15 391.63A62.0 62.0 0 0 1 367.53 353.67Z" fill="#a5a5a5" stroke="#fff" stroke-width="1.5" stroke-linejoin="round"/><path d="M429.50 351.60L367.53 353.67A62.0 62.0 0 0 1 429.50 289.60Z" fill="#ffc000" stroke="#fff" stroke-width="1.5" stroke-linejoin="round"/><circle cx="443.31" cy="286.31" r="2.1" fill="#fff" stroke="#4f93d8" stroke-width="1"/><circle cx="443.31" cy="348.31" r="2.1" fill="#fff" stroke="#4f93d8" stroke-width="1"/><circle cx="471.28" cy="403.64" r="2.1" fill="#fff" stroke="#4f93d8" stroke-width="1"/><path fill="#fd3531" d="M488.9 358.6C488.5 356 491 354.300 493.5 355.200L512.3 366C512.5 362.500 514.5 360.300 517 360.400L518.7 360.200C518.7 357.500 521 355 523.5 355.300L525 355C525.3 352.800 527.5 351 530 351.200C537 351.500 547 359 547 372C547 384 539 392 529 392C520 391.500 509 387 503 385.200C500 384.300 498.8 382 499.8 380.500C500.8 378.500 503 378.200 506 378.300L511 378.800C514 379.500 517 381 519.5 382.500L519.9 381.400L492.5 363.400C490.5 362.500 489.2 360.500 488.9 358.600Z"/></svg>
<span class="t" style="left:480.71px;top:330px;color:#404040;font-size:9.2px;line-height:13px;transform:scaleX(0.9000);">43%</span>
<span class="t" style="left:385.71px;top:314px;color:#404040;font-size:9.2px;line-height:13px;transform:scaleX(0.9000);">25%</span>
<span class="t" style="left:375.02px;top:362px;color:#404040;font-size:9.2px;line-height:13px;transform:scaleX(0.9000);">11%</span>
<span class="t" style="left:411.71px;top:396px;color:#404040;font-size:9.2px;line-height:13px;transform:scaleX(0.9000);">21%</span>
<div class="b " style="left:400.0px;top:442px;width:3.6px;height:3.6px;background:#4472c4;"></div>
<span class="t" style="left:407.01px;top:438px;color:#595959;font-size:8.5px;line-height:12px;transform:scaleX(0.9500);">A</span>
<div class="b " style="left:417.8px;top:442px;width:3.6px;height:3.6px;background:#ed7d31;"></div>
<span class="t" style="left:423.91px;top:438px;color:#595959;font-size:8.5px;line-height:12px;transform:scaleX(0.9500);">B</span>
<div class="b " style="left:435.0px;top:442px;width:3.6px;height:3.6px;background:#a5a5a5;"></div>
<span class="t" style="left:440.88px;top:438px;color:#595959;font-size:8.5px;line-height:12px;transform:scaleX(0.9500);">C</span>
<div class="b " style="left:451.8px;top:442px;width:3.6px;height:3.6px;background:#ffc000;"></div>
<span class="t" style="left:458.28px;top:438px;color:#595959;font-size:8.5px;line-height:12px;transform:scaleX(0.9500);">D</span>
<svg class="b" style="left:247.0px;top:239.0px;" width="9" height="9" viewBox="0 0 9 9"><circle cx="4.5" cy="4.5" r="3.6" fill="#fff" stroke="#555" stroke-width="1.3"/></svg>
<svg class="b" style="left:426.5px;top:239.0px;" width="9" height="9" viewBox="0 0 9 9"><circle cx="4.5" cy="4.5" r="3.6" fill="#fff" stroke="#555" stroke-width="1.3"/></svg>
<svg class="b" style="left:606.5px;top:239.0px;" width="9" height="9" viewBox="0 0 9 9"><circle cx="4.5" cy="4.5" r="3.6" fill="#fff" stroke="#555" stroke-width="1.3"/></svg>
<svg class="b" style="left:247.0px;top:346.0px;" width="9" height="9" viewBox="0 0 9 9"><circle cx="4.5" cy="4.5" r="3.6" fill="#fff" stroke="#555" stroke-width="1.3"/></svg>
<svg class="b" style="left:606.5px;top:346.0px;" width="9" height="9" viewBox="0 0 9 9"><circle cx="4.5" cy="4.5" r="3.6" fill="#fff" stroke="#555" stroke-width="1.3"/></svg>
<div class="b " style="left:619.2px;top:242.2px;width:21.2px;height:20.7px;background:#fff;border:1px solid #b0b0b0;box-sizing:border-box;"></div>
<div class="b " style="left:619.2px;top:270.2px;width:21.2px;height:20.7px;background:#fff;border:1px solid #b0b0b0;box-sizing:border-box;"></div>
<div class="b " style="left:619.2px;top:298.8px;width:21.2px;height:20.7px;background:#fff;border:1px solid #b0b0b0;box-sizing:border-box;"></div>
<svg class="b" style="left:624.8px;top:247.6px;" width="10" height="10" viewBox="0 0 10 10"><path d="M5 .8v8.400M.8 5h8.400" stroke="#55a27f" stroke-width="2.400"/></svg>
<svg class="b" style="left:624px;top:275.3px;" width="12" height="12" viewBox="0 0 12 12"><path d="M11.700 1L8 7.400 6.200 6 11 .4z" fill="#5a5a5a"/><path d="M6.200 6L8 7.400 6 9.500 4.300 8.100z" fill="#8d8d8d"/><path d="M4.300 8.100L6 9.500C4.800 10.900 2.600 11 .4 10.700 2 10.100 2.600 9.300 4.300 8.100z" fill="#4a78c0"/></svg>
<svg class="b" style="left:623.9px;top:304.2px;" width="12" height="11" viewBox="0 0 12 11"><path d="M.2 .3h11.400L7.300 5v5.400L4.500 9.100V5z" fill="#767676"/></svg>
<div class="b " style="left:554.5px;top:336.5px;width:48.5px;height:13px;background:#fff;border:1px solid #d9d9d9;box-sizing:border-box;box-shadow:1.5px 1.5px 2px rgba(0,0,0,.28);border-radius:1px;"></div>
<span class="t" style="left:557.50px;top:337px;color:#5f5f5f;font-size:9px;line-height:13px;transform:scaleX(0.9413);">Chart Area</span>
</div></body></html>
